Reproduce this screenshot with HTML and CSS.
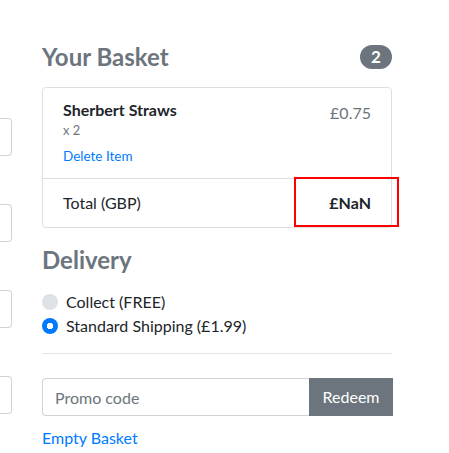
FILE: index.html
```html
<!DOCTYPE html>
<html lang="en">
<head>
<meta charset="utf-8">
<title>Your Basket</title>
<link rel="stylesheet" href="styles.css">
</head>
<body>
<div class="page">
  <div class="form-col">
    <div class="stub"></div>
    <div class="stub"></div>
    <div class="stub"></div>
    <div class="stub"></div>
  </div>
  <aside class="basket">
    <h4 class="section-title">
      <span>Your Basket</span>
      <span class="badge">2</span>
    </h4>
    <ul class="list">
      <li class="item">
        <div class="item-info">
          <h6 class="item-name">Sherbert Straws</h6>
          <small class="muted">x 2</small>
          <a class="delete" href="#">Delete Item</a>
        </div>
        <span class="muted price">£0.75</span>
      </li>
      <li class="item total">
        <span>Total (GBP)</span>
        <strong>£NaN</strong>
        <span class="highlight"></span>
      </li>
    </ul>
    <h4 class="section-title delivery">Delivery</h4>
    <div class="radios">
      <label class="radio"><input type="radio" name="delivery"><span>Collect (FREE)</span></label>
      <label class="radio"><input type="radio" name="delivery" checked><span>Standard Shipping (£1.99)</span></label>
    </div>
    <hr class="rule">
    <form class="promo">
      <input class="promo-input" type="text" placeholder="Promo code">
      <button class="promo-btn" type="button">Redeem</button>
    </form>
    <a class="empty" href="#">Empty Basket</a>
  </aside>
</div>
</body>
</html>
```
FILE: styles.css
```css
* { box-sizing: border-box; }
html, body { margin: 0; padding: 0; background: #fff; }
body {
  font-family: "Lato", "Open Sans", "Liberation Sans", sans-serif;
  font-size: 16px;
  line-height: 1.5;
  color: #212529;
}
.page {
  display: flex;
  align-items: flex-start;
}
.form-col {
  flex: 0 0 12px;
  padding-top: 118px;
  display: flex;
  flex-direction: column;
  gap: 48px;
}
.stub {
  height: 38px;
  border: 1px solid #ced4da;
  border-left: none;
  border-radius: 0 4px 4px 0;
}
.basket {
  flex: 0 0 350px;
  margin-left: 30px;
  padding-top: 42px;
}
.section-title {
  margin: 0 0 16px;
  font-size: 24px;
  font-weight: 700;
  line-height: 29px;
  color: #6c757d;
  display: flex;
  justify-content: space-between;
  align-items: center;
}
.badge {
  display: inline-flex;
  align-items: center;
  justify-content: center;
  min-width: 32px;
  height: 24px;
  padding: 0 10px;
  border-radius: 12px;
  background: #6c757d;
  color: #fff;
  font-size: 17px;
  font-weight: 700;
  line-height: 1;
}
.list {
  list-style: none;
  margin: 0;
  padding: 0;
  border: 1px solid #dfdfdf;
  border-radius: 4px;
}
.item {
  display: flex;
  justify-content: space-between;
  padding: 12px 20px;
  position: relative;
}
.item + .item { border-top: 1px solid #dfdfdf; }
.item-info {
  display: flex;
  flex-direction: column;
}
.item-name {
  margin: 0;
  font-size: 16px;
  font-weight: 700;
  line-height: 19px;
}
.muted { color: #6c757d; }
small.muted {
  font-size: 12.8px;
  line-height: 19px;
  padding-top: 2px;
}
.price { line-height: 24px; padding-top: 1px; }
.delete {
  margin-top: 6px;
  font-size: 13.5px;
  line-height: 20px;
  color: #007bff;
  text-decoration: none;
}
.total { line-height: 24px; }
.total strong { font-weight: 700; }
.highlight {
  position: absolute;
  top: -2px;
  right: -8px;
  width: 105px;
  height: 50px;
  border: 2px solid #ff0000;
}
.delivery {
  margin-top: 17px;
}
.radios {
  display: flex;
  flex-direction: column;
}
.radio {
  display: flex;
  align-items: center;
  gap: 8px;
  line-height: 24px;
}
.radio input {
  appearance: none;
  -webkit-appearance: none;
  margin: 0;
  width: 16px;
  height: 16px;
  border-radius: 50%;
  background: #dee2e6;
  flex: none;
}
.radio input:checked {
  background: radial-gradient(circle, #fff 0 3px, #007bff 3.5px);
}
.rule {
  margin: 15px 0 24px;
  border: 0;
  border-top: 1px solid #e5e5e5;
  height: 0;
}
.promo {
  display: flex;
  margin: 0;
}
.promo-input {
  flex: 1 1 auto;
  min-width: 0;
  height: 38px;
  padding: 6px 12px;
  border: 1px solid #ced4da;
  border-right: none;
  border-radius: 4px 0 0 4px;
  font: inherit;
  color: #495057;
  outline: none;
}
.promo-input::placeholder { color: #6c757d; opacity: 1; }
.promo-btn {
  flex: none;
  width: 84px;
  height: 38px;
  padding: 6px 0;
  border: 1px solid #6c757d;
  border-radius: 0;
  margin-right: -1px;
  background: #6c757d;
  color: #fff;
  font: inherit;
}
.empty {
  display: block;
  margin-top: 10px;
  color: #007bff;
  text-decoration: none;
}
```
